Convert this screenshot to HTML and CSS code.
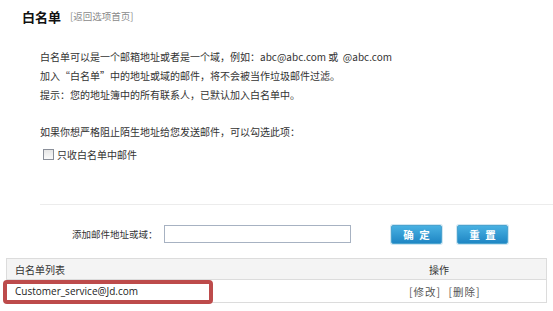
FILE: index.html
```html
<!DOCTYPE html>
<html lang="zh">
<head>
<meta charset="utf-8">
<link rel="stylesheet" href="styles.css">
</head>
<body>
<div class="page">
  <div class="head">
    <span class="title">白名单</span>
    <a class="back">[返回选项首页]</a>
  </div>
  <div class="intro">
    <p>白名单可以是一个邮箱地址或者是一个域，例如：abc@abc.com 或&nbsp; @abc.com</p>
    <p>加入“白名单”中的地址或域的邮件，将不会被当作垃圾邮件过滤。</p>
    <p>提示：您的地址簿中的所有联系人，已默认加入白名单中。</p>
    <p class="ask">如果你想严格阻止陌生地址给您发送邮件，可以勾选此项：</p>
    <label class="check"><span class="box"></span>只收白名单中邮件</label>
  </div>
  <div class="divider"></div>
  <div class="form">
    <span class="label">添加邮件地址或域：</span>
    <span class="input"></span>
    <span class="btn">确&nbsp;定</span>
    <span class="btn">重&nbsp;置</span>
  </div>
  <div class="table">
    <div class="row th">
      <span class="c1">白名单列表</span>
      <span class="c2">操作</span>
    </div>
    <div class="row td">
      <span class="c1 email">Customer_service@Jd.com</span>
      <span class="c2 ops">[修改] [删除]</span>
    </div>
    <div class="highlight"></div>
  </div>
</div>
</body>
</html>
```
FILE: styles.css
```css
html, body {
  margin: 0;
  padding: 0;
  background: #fff;
}
.page {
  width: 553px;
  height: 311px;
  overflow: hidden;
  font-family: "Noto Sans CJK SC", "Liberation Sans", sans-serif;
  color: #333;
  font-size: 10px;
}
.head {
  padding: 6px 0 0 22px;
  height: 20px;
  display: flex;
  align-items: center;
}
.title {
  font-size: 13px;
  font-weight: bold;
  color: #111;
}
.back {
  margin-left: 9px;
  font-size: 9.5px;
  color: #8a8a8a;
}
.intro {
  margin: 21px 0 0 40px;
}
.intro p {
  margin: 0;
  line-height: 19px;
  height: 19px;
  white-space: nowrap;
}
.intro p.ask {
  margin-top: 18px;
}
.check {
  display: flex;
  align-items: center;
  margin: 4px 0 0 3px;
  height: 19px;
}
.box {
  width: 9px;
  height: 9px;
  border: 1px solid #8a8f99;
  background: linear-gradient(#e6e6e6, #fafafa);
  margin-right: 3px;
}
.divider {
  margin: 40px 0 0 40px;
  border-top: 1px solid #ececec;
}
.form {
  margin-top: 19px;
  display: flex;
  align-items: center;
  height: 20px;
  padding-left: 72px;
}
.label {
  width: 92px;
  white-space: nowrap;
  font-size: 9.5px;
}
.input {
  width: 185px;
  height: 16px;
  border: 1px solid #a7b2c2;
  background: #fff;
}
.btn {
  margin-left: 40px;
  width: 49px;
  height: 17px;
  border: 1px solid #4aa3cf;
  border-radius: 2px;
  background: linear-gradient(#48b1e2, #1f86c4);
  color: #fff;
  font-weight: bold;
  font-size: 10.5px;
  word-spacing: 3px;
  display: flex;
  align-items: center;
  justify-content: center;
  box-shadow: 0 0 0 1px #cfe6f2;
}
.btn + .btn {
  margin-left: 15px;
}
.table {
  position: relative;
  margin: 14px 0 0 6px;
  width: 539px;
  border: 1px solid #dcdcdc;
}
.row {
  display: flex;
  align-items: center;
  height: 20px;
}
.td {
  height: 22px;
}
.th {
  background: #f4f4f4;
  border-bottom: 1px solid #dcdcdc;
}
.c1 {
  flex: 1;
  padding-left: 8px;
}
.c2 {
  width: 117px;
}
.ops {
  margin-left: -20px;
  width: 137px;
  color: #555;
  font-size: 10.5px;
  letter-spacing: 1px;
  word-spacing: 4px;
}
.email {
  font-family: "Open Sans", "Liberation Sans", sans-serif;
  font-size: 10px;
  color: #222;
}
.highlight {
  position: absolute;
  left: -4px;
  top: 21px;
  width: 202px;
  height: 16px;
  border: 4px solid #bd4b4b;
  border-radius: 4px;
}
```
